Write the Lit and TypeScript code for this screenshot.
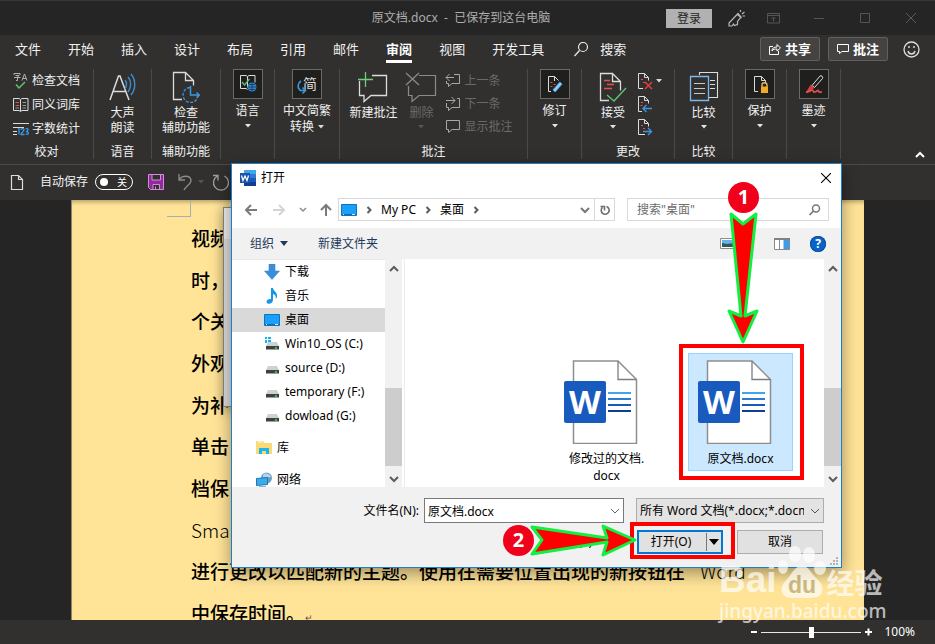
import { LitElement, html, css, svg, nothing, TemplateResult } from "lit";
import { customElement, property } from "lit/decorators.js";
import { classMap } from "lit/directives/class-map.js";

const pic = (w: number, h: number, body: unknown) =>
  html`<svg width=${w} height=${h} viewBox="0 0 ${w} ${h}" fill="none" aria-hidden="true">${body}</svg>`;

const caret = (color = "#d8d8d8") =>
  html`<svg width="6" height="4" viewBox="0 0 6 4" aria-hidden="true"><path d="M0 0h6L3 3.5z" fill=${color} /></svg>`;

const W = "#dcdcdc";
const ICON: Record<string, TemplateResult> = {
  spell: pic(16, 18, svg`<path d="M1 3V1.500h6V3M2.500 3.500h3.500L4.500 5M1 5.500h6.500M4.500 5v3.500H3M9 8.500L11.500 2 14 8.500M10 6.500h3" stroke="#b0b0b0"/><path d="M3 12.500l3 3.500 6-6" stroke="#5fc46e" stroke-width="1.500"/>`),
  book: pic(16, 16, svg`<path d="M.5 1.500h5.500l1.500 1 1.500-1h6v12H9l-1.500 1-1.500-1H.5zM7.500 3v11" stroke=${W}/><path d="M2.500 5.500h3.500M2.500 8.500h3.500" stroke="#e2504f"/><path d="M9.500 5.500h3.500M9.500 8.500h3.500M9.500 11h3.500M2.500 11h3.500" stroke="#9a9a9a"/>`),
  lines: pic(16, 16, svg`<path d="M0 2.500h16M0 6.500h11M0 10.500h4M0 13.500h4" stroke=${W}/><path d="M5 8l1-.5V13.500M8 9c0-2 3-2 3 0 0 1.500-3 2.500-3 4.500h3.500M12.500 8c3-1.500 3.500 2 .5 2.500 3.500.5 3 4-.5 2.500" stroke="#3c96dd" stroke-width="1.300"/>`),
  speak: pic(30, 32, svg`<path d="M2 29L10.500 5h1.500L21 29M5.500 20.500h12" stroke=${W} stroke-width="1.500"/><path d="M17 9c2 2 2 6 0 9M20 6c3.500 4 3.500 10 0 15M23 3c5 6 5 15 0 21" stroke="#3c8ed2" stroke-width="1.400"/>`),
  access: pic(28, 32, svg`<path d="M10 28.500H1.500v-27h12l8 8v5M13.500 1.500v8h8" stroke=${W} stroke-width="1.300"/><path d="M18 16.500a7.500 7.500 0 1 0 8 8" stroke="#3c96dd" stroke-width="1.300" stroke-dasharray="3 1.500"/><path d="M18.500 15v9h8M24.500 21.500l3 2.500-3 2.500" stroke="#3c96dd" stroke-width="1.500"/>`),
  lang: pic(20, 20, svg`<path d="M9.500 15.500l-1.500-1H2.500v-13H8l1.500 1 1.500-1h6v7M9.500 2.500v11" stroke=${W}/><path d="M4 8l2.500 3 5-6" stroke="#5fc46e" stroke-width="1.300"/><circle cx="14" cy="13" r="4.500" fill="#2b88d8"/><path d="M9.500 13h9M14 8.500v9M11 10.500h6M11 15.500h6" stroke="#1c2a38" stroke-width=".7"/>`),
  swap: html`<span class="jian">简${pic(12, 16, svg`<path d="M4 2c-3.500 2-4 7-.5 9.500h4.500M5.500 8.500l3 3-3 3" stroke="#3c96dd" stroke-width="1.600"/>`)}</span>`,
  newnote: pic(32, 32, svg`<path d="M15 4.500h14.500v20H14l-7 6v-6H2.500V10" stroke=${W} stroke-width="1.300"/><path d="M8.500 1v15M1 8.500h15" stroke="#6bd17b" stroke-width="1.300"/>`),
  delnote: pic(32, 32, svg`<path d="M14 4.500h16.500v20H14l-7 6v-6H3.500V15" stroke="#8a8a8a" stroke-width="1.200"/><path d="M1 2l13 12M14 2L1 14" stroke="#8a8a8a" stroke-width="1.300"/>`),
  prev: pic(16, 16, svg`<path d="M9 1.500h5.500v9H7l-3.500 3v-3h-2V8M9 4.500H1M4.500 1L1 4.500 4.500 8" stroke="#a8a8a8"/>`),
  next: pic(16, 16, svg`<path d="M12 2.500h2.500v9H7l-3.500 3v-3h-2V7M1 4.500h9M6.500 1L10 4.500 6.500 8" stroke="#a8a8a8"/>`),
  show: pic(16, 16, svg`<path d="M1.500 1.500h13v9H7l-3.500 3v-3h-2z" stroke="#a8a8a8"/>`),
  track: pic(20, 20, svg`<path d="M6 17.500H3.500v-15h6l4 4M9.500 2.500V7" stroke=${W}/><path d="M5.500 8.500h2M8.500 10.500h2M5.500 12.500h2" stroke="#e2504f"/><path d="M16 9L9 17" stroke="#3c96dd" stroke-width="4"/><path d="M16 9L9 17" stroke="#9dcdf3" stroke-width="2"/>`),
  accept: pic(28, 32, svg`<path d="M10 29.500H1.500v-27h12l8 8v9M13.500 2.500v8h8" stroke=${W} stroke-width="1.300"/><path d="M5 9.500h6M8 13.500h7M5 17.500h8" stroke="#e2504f" stroke-width="1.300"/><path d="M8 24l7 6 12-13" stroke="#5fc46e" stroke-width="1.400"/>`),
  rej: pic(16, 18, svg`<path d="M6 16.500H1.500v-15h6l4 4v3M7.500 1.500v4h4" stroke=${W}/><path d="M4 7.500h2M6 10.500h2" stroke="#e2504f"/><path d="M8 10l7 7M15 10l-7 7" stroke="#e33c3c" stroke-width="1.500"/>`),
  rejl: pic(16, 18, svg`<path d="M5 16.500H1.500v-15h6l4 4v3M7.500 1.500v4h4" stroke=${W}/><path d="M4 7.500h2M3.500 10.500h2" stroke="#e2504f"/><path d="M15 13.500H6.500M9.500 10L6 13.500 9.500 17" stroke="#3c96dd" stroke-width="1.400"/>`),
  rejr: pic(16, 18, svg`<path d="M8 16.500H1.500v-15h6l4 4v3M7.500 1.500v4h4" stroke=${W}/><path d="M4 7.500h2M6 10.500h2" stroke="#e2504f"/><path d="M6 13.500h8.500M11 10l3.500 3.500L11 17" stroke="#3c96dd" stroke-width="1.400"/>`),
  compare: pic(30, 32, svg`<path d="M10.500 4V1.500h18v25h-9M21 9.500h5M21 13.500h5M21 17.500h5" stroke=${W} stroke-width="1.100"/><path d="M1.500 5.500h18v24h-18z" stroke="#7db8ec" stroke-width="1.300"/><path d="M5 12.500h11M5 17.500h11M5 22.500h11" stroke="#c8c8c8" stroke-width="1.100"/>`),
  protect: pic(20, 20, svg`<path d="M8 17.500H4.500v-15h7l4 4v3M11.500 2.500v4h4" stroke=${W}/><path d="M12 13v-2c0-3 5-3 5 0v2" stroke="#e8b94f" stroke-width="1.400"/><path d="M11 12.500h7V19h-7z" fill="#f3a928"/>`),
  ink: pic(20, 20, svg`<path d="M16 2L8 11.500l2.500 2L18.500 4.500c1-2-1.500-3.500-2.500-2.500z" stroke=${W}/><path d="M7 10.500c-2 2-3 5-5 7.500 4 .5 6-1 8-4z" fill="#d23c3c"/><path d="M2 18.500c3-1 6-3 7-2s0 2 2 1.500 3-3 3.500-1 2 1 3.500 1" stroke="#e2504f" stroke-width="1.700"/>`),
};

interface Tool { icon: string; lines: string[]; boxed?: boolean; drop?: "below" | "inline"; off?: boolean }
interface Group { cls: string; label: string; tools?: Tool[]; list?: { icon: string; text: string; off?: boolean; drop?: boolean }[]; tight?: boolean }

const GROUPS: Group[] = [
  { cls: "w94", label: "校对", list: [{ icon: "spell", text: "检查文档" }, { icon: "book", text: "同义词库" }, { icon: "lines", text: "字数统计" }] },
  { cls: "w58", label: "语音", tools: [{ icon: "speak", lines: ["大声", "朗读"] }] },
  { cls: "w69", label: "辅助功能", tools: [{ icon: "access", lines: ["检查", "辅助功能"] }] },
  { cls: "w54", label: "", tools: [{ icon: "lang", lines: ["语言"], boxed: true, drop: "below" }] },
  { cls: "w65", label: "", tools: [{ icon: "swap", lines: ["中文简繁", "转换"], boxed: true, drop: "inline" }] },
  { cls: "w188", label: "批注", tight: true,
    tools: [{ icon: "newnote", lines: ["新建批注"] }, { icon: "delnote", lines: ["删除"], drop: "below", off: true }],
    list: [{ icon: "prev", text: "上一条", off: true }, { icon: "next", text: "下一条", off: true }, { icon: "show", text: "显示批注", off: true }] },
  { cls: "w54", label: "", tools: [{ icon: "track", lines: ["修订"], boxed: true, drop: "below" }] },
  { cls: "w93", label: "更改", tight: true,
    tools: [{ icon: "accept", lines: ["接受"], drop: "below" }],
    list: [{ icon: "rej", text: "", drop: true }, { icon: "rejl", text: "" }, { icon: "rejr", text: "" }] },
  { cls: "w58", label: "比较", tools: [{ icon: "compare", lines: ["比较"], drop: "below" }] },
  { cls: "w54", label: "", tools: [{ icon: "protect", lines: ["保护"], boxed: true, drop: "below" }] },
  { cls: "w54", label: "", tools: [{ icon: "ink", lines: ["墨迹"], boxed: true, drop: "below" }] },
];

const base = css`
  * { box-sizing: border-box; }
  svg { display: block; flex: none; }
  button, input, select {
    font: inherit; color: inherit; background: none; border: 0; padding: 0; margin: 0; border-radius: 0; outline: none;
  }
  a { color: inherit; text-decoration: none; }
`;

@customElement("word-ribbon")
class WordRibbon extends LitElement {
  static styles = [base, css`
    :host { display: flex; height: 96px; padding-bottom: 5px; border-bottom: 1px solid #4a4a49; font-size: 12px; line-height: 16px; color: #f0f0f0; }
    .group { display: flex; flex-direction: column; flex: none; border-right: 1px solid #4b4a49; }
    .w54 { width: 54px; } .w58 { width: 58px; } .w65 { width: 65px; } .w69 { width: 69px; }
    .w93 { width: 93px; } .w94 { width: 94px; } .w188 { width: 188px; }
    .body { display: flex; flex: 1; justify-content: center; }
    .tight { padding-right: 5px; }
    .label { text-align: center; height: 15px; line-height: 15px; }
    .tool { display: flex; flex-direction: column; align-items: center; width: 48px; flex: none; white-space: nowrap; line-height: 15px; }
    .face { height: 36px; display: flex; align-items: center; justify-content: center; }
    .boxed { line-height: 16px; }
    .boxed .face { width: 30px; height: 30px; border: 1px solid #6a6a6a; background: #1f1f1e; margin-bottom: 4px; }
    .line { display: flex; align-items: center; gap: 4px; }
    .below { padding-top: 5px; }
    .off { color: #6b6a69; }
    .list { display: flex; flex-direction: column; }
    .row { display: flex; align-items: center; gap: 3px; height: 24px; white-space: nowrap; }
    .tight .row { height: 23px; }
    .jian { position: relative; font-size: 14px; color: #dcdcdc; padding-left: 6px; line-height: 20px; }
    .jian svg { position: absolute; left: 0; top: 5px; }
    .fold { margin-left: auto; align-self: flex-end; padding: 0 10px 0 0; }
  `];

  render() {
    return html`${GROUPS.map((g) => html`
      <section class="group ${g.cls}">
        <div class="body ${g.tight ? "tight" : ""}">
          ${g.tools?.map((t) => html`
            <button class=${classMap({ tool: true, boxed: !!t.boxed, off: !!t.off })}>
              <span class="face">${ICON[t.icon]}</span>
              ${t.lines.map((l, i) => html`<span class="line">${l}${t.drop === "inline" && i === t.lines.length - 1 ? caret() : nothing}</span>`)}
              ${t.drop === "below" ? html`<span class="below">${caret(t.off ? "#555" : "#e4e4e4")}</span>` : nothing}
            </button>`) ?? nothing}
          ${g.list ? html`<div class="list">${g.list.map((r) => html`
            <button class="row ${r.off ? "off" : ""}">${ICON[r.icon]}${r.text ? html`<span>${r.text}</span>` : nothing}${r.drop ? caret() : nothing}</button>`)}</div>` : nothing}
        </div>
        <div class="label">${g.label}</div>
      </section>`)}
      <button class="fold" aria-label="折叠功能区">${pic(10, 8, svg`<path d="M1 6l4-4 4 4" stroke="#fff" stroke-width="2"/>`)}</button>`;
  }
}

const deskIcon = pic(16, 16, svg`<path d="M.5 2.500h15v11H.5z" fill="#1aa0fb" stroke="#1273b4"/><path d="M1 12.500h14" stroke="#0f6db4"/><path d="M2 12.500h1M11 12.500h3" stroke="#d6efff"/>`);
const disk = (win = false) => pic(16, 16, svg`${win ? svg`<path d="M1 1h2v2H1zM4 1h3v2H4zM1 4h2v3H1zM4 4h3v3H4z" fill="#12b4ee"/>` : nothing}<path d="M4 6h9l2 4H2z" fill="#ced1d1"/><path d="M2 10h13v3.500H2z" fill="#3d4142"/><path d="M11 12h2" stroke="#46dd4b" stroke-width="1.500"/>`);
const TREE = [
  { text: "下载", cls: "sub", icon: pic(16, 16, svg`<path d="M5 0h6v7h4.500L8 15.500.5 7H5z" fill="#3a8fdd" stroke="#2f7ec8" stroke-width=".5"/>`) },
  { text: "音乐", cls: "sub", icon: pic(16, 16, svg`<path d="M7 0h2c0 3 4.500 4 4 8.500-.3 1.500-1 2-1.500 2.500.8-3-.5-4.500-2.500-5v6c0 4-6 5-6.500 2 0-2.500 2.500-3.500 4.500-3z" fill="#1496ee"/>`) },
  { text: "桌面", cls: "sub on", icon: deskIcon },
  { text: "Win10_OS (C:)", cls: "sub", icon: disk(true) },
  { text: "source (D:)", cls: "sub", icon: disk() },
  { text: "temporary (F:)", cls: "sub", icon: disk() },
  { text: "dowload (G:)", cls: "sub", icon: disk() },
  { text: "库", cls: "top", icon: pic(16, 16, svg`<path d="M0 1h7l1 2h8v11H0z" fill="#fbd976"/><path d="M2 2h4" stroke="#fff"/><path d="M3 14V8h10v6h-3v-3H6v3z" fill="#1cb6ee"/>`) },
  { text: "网络", cls: "top", icon: pic(16, 16, svg`<circle cx="10.500" cy="6" r="5.500" fill="#6c9fc5"/><path d="M7 3c3-3 7-1 8 2-3 1-4-1-8 1z" fill="#b7d3e6"/><path d="M.5 6.500l11-1v7l-11 1z" fill="#3cabe9" stroke="#1b78ba"/><path d="M3 15h7" stroke="#2a6a99"/>`) },
];

const chev = (d: "up" | "down" | "right", color = "#5c5c5c", width = 2) => pic(10, 10,
  d === "up" ? svg`<path d="M1 7l4-4 4 4" stroke=${color} stroke-width=${width}/>`
  : d === "down" ? svg`<path d="M1 3l4 4 4-4" stroke=${color} stroke-width=${width}/>`
  : svg`<path d="M3.500 2l3 3-3 3" stroke=${color} stroke-width=${width}/>`);

@customElement("doc-file")
class DocFile extends LitElement {
  @property() name = "";
  @property({ type: Boolean, reflect: true }) selected = false;
  static styles = [base, css`
    :host { display: block; position: relative; width: 105px; height: 118px; padding-top: 6px; border: 1px solid transparent; }
    :host([selected]) { background: #cce8ff; border-color: #99d1ff; }
    .art { margin-left: 8px; }
    .name { display: block; text-align: center; line-height: 17px; padding: 6px 10px 0; word-break: keep-all; }
    .w { font: bold 33px "Open Sans", "Noto Sans", sans-serif; }
    .frame { position: absolute; inset: -10px -12px -10px -10px; border: 4px solid #ff0000; }
  `];
  render() {
    const dot = this.name.lastIndexOf(".") + 1;
    return html`<svg class="art" width="84" height="84" viewBox="0 0 84 84" aria-hidden="true">
        <path d="M10.500 1H55l18.500 18.500V83.500h-63z" fill="#fff" stroke="#8e8e8e" stroke-width="1.500"/>
        <path d="M55 1v18.500h18.500" fill="none" stroke="#7d7d7d" stroke-width="1.300"/>
        <rect x="1" y="21" width="42" height="42" rx="2" fill="#185abd"/>
        <text class="w" x="22" y="54" text-anchor="middle" fill="#fff">W</text>
        <path d="M45 33h23" stroke="#41a5ee" stroke-width="2"/><path d="M45 39h23" stroke="#2b7cd3" stroke-width="2"/>
        <path d="M45 45h23" stroke="#185abd" stroke-width="2"/><path d="M45 51h23" stroke="#103f91" stroke-width="2"/>
      </svg>
      <span class="name">${this.name.slice(0, dot)}<wbr>${this.name.slice(dot)}</span>
      ${this.selected ? html`<span class="frame"></span>` : nothing}`;
  }
}

@customElement("open-dialog")
class OpenDialog extends LitElement {
  static styles = [base, css`
    :host { display: flex; flex-direction: column; background: #fff; color: #000; border: 1px solid #1a7fd0; font-size: 12px; line-height: 16px; box-shadow: 0 5px 16px rgba(0, 0, 0, .4); }
    .bar { display: flex; align-items: center; flex: none; }
    .title { height: 27px; padding: 0 10px 0 8px; gap: 5px; }
    .title .x { margin-left: auto; }
    .nav { height: 37px; padding: 0 12px 0 11px; }
    .nav .arrows { display: flex; align-items: center; width: 95px; gap: 12px; }
    .path { display: flex; align-items: center; flex: 1; height: 23px; border: 1px solid #d9d9d9; padding-left: 2px; gap: 7px; }
    .path .end { margin-left: auto; display: flex; align-items: center; align-self: stretch; gap: 4px; }
    .path .re { border-left: 1px solid #d9d9d9; align-self: stretch; width: 20px; display: flex; align-items: center; justify-content: center; }
    .find { display: flex; align-items: center; width: 202px; height: 23px; margin-left: 12px; border: 1px solid #d9d9d9; padding: 0 7px 0 9px; }
    .find input { flex: 1; min-width: 0; }
    .find input::placeholder { color: #6d6d6d; opacity: 1; }
    .tools { height: 31px; background: #f1f1f1; color: #1e395b; padding: 0 15px 0 18px; }
    .tools button { display: flex; align-items: center; gap: 6px; }
    .tools .new { margin-left: 30px; }
    .tools .view { margin-left: auto; }
    .tools .pane { margin-left: 38px; }
    .tools .help { margin-left: 20px; width: 16px; height: 16px; border-radius: 8px; background: #0a63c9; color: #fff; font-weight: bold; justify-content: center; box-shadow: inset 0 0 0 1px #0b4f9e; }
    .main { display: flex; flex: 1; min-height: 0; }
    .tree { width: 153px; overflow: hidden; border-top: 1px solid #e6e6e6; }
    .node { display: flex; align-items: center; gap: 5px; height: 24px; white-space: nowrap; }
    .sub { padding-left: 32px; }
    .top { padding-left: 24px; margin-top: 8px; }
    .on { background: #d9d9d9; }
    .scroll { display: flex; flex-direction: column; align-items: center; width: 17px; background: #f1f1f1; padding: 5px 0 3px; }
    .scroll .thumb { width: 17px; height: 78px; background: #cdcdcd; margin: auto 0 8px; }
    .files { flex: 1; display: flex; justify-content: flex-end; gap: 29px; margin-left: 2px; border-left: 1px solid #ececec; padding: 94px 31px 0 0; }
    .foot { background: #f1f1f1; padding: 11px 17px 13px 0; display: grid; grid-template-columns: 1fr 200px 188px; column-gap: 12px; row-gap: 7px; align-items: center; }
    .foot label { text-align: right; margin-right: -7px; }
    .combo { position: relative; display: flex; align-items: center; height: 25px; border: 1px solid #7a7a7a; background: #fff; padding: 0 3px; gap: 6px; }
    .combo input, .combo select { flex: 1; min-width: 0; height: 100%; }
    .combo select { appearance: none; }
    .kind { border-color: #adadad; background: #e3e3e3; }
    .util { grid-column: 2; text-align: right; padding-right: 32px; }
    .acts { display: flex; justify-content: space-between; padding: 0 1px; }
    .btn { height: 24px; width: 86px; border: 1px solid #adadad; background: #e1e1e1; }
    .split { position: relative; display: flex; width: 86px; height: 24px; border: 2px solid #0078d7; background: #e1e1e1; }
    .split .go { flex: 1; padding-right: 3px; }
    .split .more { width: 15px; border-left: 1px solid #777; display: flex; align-items: center; justify-content: center; margin: 1px 0; }
    .split .ring { position: absolute; inset: -10px -14px -7px -9px; border: 4px solid #ff0000; pointer-events: none; }
    .grip { position: absolute; right: 3px; bottom: 2px; }
    .note { position: absolute; pointer-events: none; }
    .badge { position: absolute; width: 31px; height: 31px; border-radius: 16px; background: #f0001a; color: #fff; font: bold 20px/30px "Open Sans", sans-serif; text-align: center; }
    .b1 { left: 496px; top: 18px; } .b2 { left: 271px; top: 361px; }
    .a1 { left: 494px; top: 46px; } .a2 { left: 296px; top: 359px; }
  `];
  render() {
    return html`
      <div class="bar title">
        ${pic(16, 16, svg`<path d="M4 0h12v4H4z" fill="#41a5ee"/><path d="M4 4h12v4H4z" fill="#2b7cd3"/><path d="M4 8h12v4H4z" fill="#185abd"/><path d="M4 12h12v4H4z" fill="#103f91"/><path d="M0 3h10v10H0z" fill="#1a52ad"/><path d="M1.500 5.500L3 10.500l2-4.500 2 4.500 1.500-5" stroke="#fff" stroke-width="1.300"/>`)}
        <span>打开</span>
        <button class="x" aria-label="关闭">${pic(10, 10, svg`<path d="M0 0l10 10M10 0L0 10" stroke="#000" stroke-width="1.100"/>`)}</button>
      </div>
      <div class="bar nav">
        <div class="arrows">
          <button aria-label="后退">${pic(16, 14, svg`<path d="M14 7H3M8 2L3 7l5 5" stroke="#7b7b7b" stroke-width="2"/>`)}</button>
          <button aria-label="前进">${pic(16, 14, svg`<path d="M2 7h11M8 2l5 5-5 5" stroke="#d4d4d4" stroke-width="2"/>`)}</button>
          <button aria-label="最近">${pic(8, 10, svg`<path d="M1 3l3 3 3-3" stroke="#8b8b8b" stroke-width="1.500"/>`)}</button>
          <button aria-label="向上">${pic(14, 14, svg`<path d="M7 13V2M2 7l5-5 5 5" stroke="#7b7b7b" stroke-width="2"/>`)}</button>
        </div>
        <nav class="path">
          ${deskIcon}${chev("right")}<a href="#">My PC</a>${chev("right")}<a href="#">桌面</a>${chev("right")}
          <span class="end">${chev("down", "#777")}<button class="re" aria-label="刷新">${pic(12, 12, svg`<path d="M7.500 2.500a4 4 0 1 1-4 .8M1.500 2.500h4v4" stroke="#707070" stroke-width="1.600"/>`)}</button></span>
        </nav>
        <div class="find"><input aria-label="搜索" placeholder='搜索"桌面"'>${pic(12, 12, svg`<circle cx="7" cy="4.500" r="3.500" stroke="#777" stroke-width="1.500"/><path d="M4.500 7L.5 11" stroke="#777" stroke-width="1.700"/>`)}</div>
      </div>
      <div class="bar tools">
        <button>组织 ${pic(8, 5, svg`<path d="M0 0h8L4 5z" fill="#1e395b"/>`)}</button>
        <button class="new">新建文件夹</button>
        <button class="view" aria-label="视图">${pic(16, 12, svg`<path d="M.5.500h15v10H.5z" fill="#fff" stroke="#8c8c8c"/><path d="M2 2h12v4H2z" fill="#69b1ea"/><path d="M2 5l5 1 7-1v4H2z" fill="#2d5c58"/>`)}</button>
        <button class="pane" aria-label="预览窗格">${pic(16, 12, svg`<path d="M.5.500h15v11H.5zM5.500 2v9" fill="#fff" stroke="#858b91"/><path d="M0 1h16" stroke="#7b8288" stroke-width="2"/><path d="M9.500 2H15v9H9.500z" fill="#3e9ce8"/>`)}</button>
        <button class="help" aria-label="帮助">?</button>
      </div>
      <div class="main">
        <div class="tree">${TREE.map((n) => html`<div class="node ${n.cls}">${n.icon}<span>${n.text}</span></div>`)}</div>
        <div class="scroll">${chev("up")}<span class="thumb"></span>${chev("down")}</div>
        <div class="files">
          <doc-file name="修改过的文档.docx"></doc-file>
          <doc-file name="原文档.docx" selected></doc-file>
        </div>
        <div class="scroll">${chev("up")}<span class="thumb"></span>${chev("down")}</div>
      </div>
      <div class="foot">
        <label for="fn">文件名(N):</label>
        <div class="combo"><input id="fn" value="原文档.docx">${chev("down", "#666", 1)}</div>
        <div class="combo kind"><select aria-label="文件类型"><option>所有 Word 文档(*.docx;*.docm</option></select>${chev("down", "#555", 1)}</div>
        <span class="util">工具(L)</span>
        <div class="acts">
          <div class="split"><button class="go">打开(O)</button><button class="more" aria-label="更多打开方式">${pic(10, 6, svg`<path d="M0 0h10L5 6z" fill="#000"/>`)}</button><span class="ring"></span></div>
          <button class="btn">取消</button>
        </div>
      </div>
      <svg class="grip" width="8" height="8" viewBox="0 0 8 8"><path d="M6 0h2v2H6zM3 3h2v2H3zM6 3h2v2H6zM0 6h2v2H0zM3 6h2v2H3zM6 6h2v2H6z" fill="#b4b4b4"/></svg>
      <svg class="note a1" width="34" height="136" viewBox="0 0 34 136"><path d="M5 4l12 10L30 4 19 106l12-5-14 31L3 101l12 5z" fill="#f00" stroke="#10f040" stroke-width="3" stroke-linejoin="round"/></svg>
      <svg class="note a2" width="112" height="34" viewBox="0 0 112 34"><path d="M4 4l10 13L4 31l75-12-4 13 32-15L75 3l4 12z" fill="#f00" stroke="#10f040" stroke-width="3" stroke-linejoin="round"/></svg>
      <span class="badge b1">1</span><span class="badge b2">2</span>`;
  }
}

const TABS = ["文件", "开始", "插入", "设计", "布局", "引用", "邮件", "审阅", "视图", "开发工具"];
const LINES = ["视频", "时，", "个关", "外观", "为补", "单击", "档保"];

@customElement("app-root")
class AppRoot extends LitElement {
  static styles = [base, css`
    :host { display: flex; flex-direction: column; position: relative; min-height: 100vh; overflow: hidden; background: #31302f; color: #f0f0f0;
      font-family: "Noto Sans", "Noto Sans CJK SC", sans-serif; font-size: 12px; line-height: 16px; }
    .caption { display: grid; grid-template-columns: minmax(0, 1fr) auto minmax(0, 1fr); align-items: center; height: 35px; background: #252525; border-top: 1px solid #383838; color: #aeaeae; padding-right: 1px; }
    .caption h1 { grid-column: 2; margin: 0; font-size: 12px; font-weight: normal; padding-right: 12px; white-space: pre; }
    .sys { display: flex; align-items: center; justify-content: flex-end; }
    .sys button { display: flex; justify-content: center; width: 46px; }
    .sys .in { width: 46px; height: 19px; line-height: 19px; background: #b1b1b1; color: #252525; margin-right: 10px; }
    .sys .pen { width: 28px; }
    .tabs { display: flex; align-items: center; height: 34px; padding: 0 15px 6px; font-size: 13px; }
    .tabs nav { display: flex; gap: 27px; }
    .tab { line-height: 18px; padding: 5px 0 2px; border-bottom: 3px solid transparent; white-space: nowrap; }
    .cur { font-weight: bold; color: #fff; border-color: #fff; }
    .seek { display: flex; align-items: center; gap: 12px; margin-left: 30px; }
    .right { display: flex; align-items: center; gap: 8px; margin-left: auto; }
    .pill { display: flex; align-items: center; justify-content: center; gap: 4px; width: 60px; height: 24px; border: 1px solid #616060; border-radius: 2px; background: #444342; font-weight: bold; color: #fff; }
    .face { margin-left: 7px; }
    .quick { display: flex; align-items: center; height: 35px; padding: 0 0 1px 10px; }
    .quick label { margin: 0 7px 0 16px; display: flex; align-items: center; gap: 7px; }
    .toggle { position: relative; display: flex; align-items: center; justify-content: flex-end; width: 38px; height: 16px; border: 1px solid #fff; border-radius: 8px; padding-right: 5px; font-size: 10px; color: #fff; }
    .toggle input { appearance: none; position: absolute; left: 4px; top: 3px; width: 8px; height: 8px; border-radius: 4px; background: #fff; }
    .quick .save { margin-left: 8px; } .quick .undo { margin: 0 5px 0 13px; } .quick .redo { margin-left: 8px; }
    .canvas { flex: 1; display: flex; background: #252525; padding: 0 71px; min-height: 420px; overflow: hidden; }
    .page { flex: 1; position: relative; display: flex; flex-direction: column; justify-content: space-between; background: #ffe498; color: #000; border-left: 1px solid #8f8767; padding: 24px 0 0 119px; box-shadow: inset 0 5px 4px -3px rgba(0, 0, 0, .3); font: 500 19px/28px "Noto Sans CJK SC", sans-serif; }
    .page p { margin: 0; height: 28px; white-space: nowrap; }
    .page p:last-child { height: 21px; }
    .thin { font-weight: 300; } .gap { margin-left: 15px; }
    .mark { font-size: 9px; color: #555; }
    .corner { position: absolute; left: 95px; top: 0; width: 24px; height: 17px; border: solid #a9adb5; border-width: 0 1px 1px 0; }
    .status { position: relative; display: flex; align-items: center; justify-content: flex-end; height: 24px; background: #31302f; padding-right: 20px; color: #fff; gap: 4px; }
    .status input { appearance: none; width: 100px; height: 14px; background: linear-gradient(#e8e8e8, #e8e8e8) center / 100% 1px no-repeat; }
    .status input::-webkit-slider-thumb { appearance: none; width: 5px; height: 11px; background: #fff; }
    .status output { margin-left: 7px; }
    .behind { position: absolute; left: 223px; top: 207px; width: 60px; height: 200px; background: linear-gradient(#ececec 31px, #dcdcdc 31px); border: 1px solid #88867a; box-shadow: 0 3px 12px rgba(0, 0, 0, .35); }
    .dlg { position: absolute; left: 231px; top: 163px; width: 611px; height: 405px; }
    .brand { position: absolute; left: 719px; top: 544px; color: #fff; opacity: .68; pointer-events: none; }
    .logo { display: flex; align-items: flex-end; height: 56px; font: bold 37px/40px "Liberation Sans", sans-serif; }
    .logo .cn { font: bold 28px/36px "Noto Sans CJK SC", sans-serif; }
    .du { font: bold 23px "Liberation Sans", sans-serif; }
    .url { font: 500 19px/22px "Noto Sans", sans-serif; }
  `];
  render() {
    return html`
      <header class="caption">
        <h1>原文档.docx  -  已保存到这台电脑</h1>
        <div class="sys">
          <button class="in">登录</button>
          <button class="pen" aria-label="笔">${pic(17, 17, svg`<path d="M10 3.500L1 13v3h3l1.500-2 1 1.500 3-1v-3l3.500-4.500zM9 4l4.500 4M12.500 2V0M14 4l2.500-2M14.500 6h2.500" stroke="#b8b8b8" stroke-width="1.200"/>`)}</button>
          <button aria-label="功能区显示选项">${pic(13, 11, svg`<path d="M.5.500h12v9.500H.5zM.5 2.500h12M6.500 8.500v-4M4.500 6l2-2 2 2" stroke="#555"/>`)}</button>
          <button aria-label="最小化">${pic(10, 10, svg`<path d="M0 5.500h10" stroke="#555"/>`)}</button>
          <button aria-label="最大化">${pic(10, 10, svg`<path d="M.5.500h9v9h-9z" stroke="#555"/>`)}</button>
          <button aria-label="关闭">${pic(10, 10, svg`<path d="M0 0l10 10M10 0L0 10" stroke="#5c5c5c"/>`)}</button>
        </div>
      </header>
      <div class="tabs">
        <nav>${TABS.map((t) => html`<a href="#" class="tab ${t === "审阅" ? "cur" : ""}">${t}</a>`)}</nav>
        <button class="seek">${pic(14, 15, svg`<circle cx="9" cy="5" r="4.500" stroke="#e6e6e6" stroke-width="1.200"/><path d="M5.500 8.500L.5 14" stroke="#e6e6e6" stroke-width="1.300"/>`)}搜索</button>
        <div class="right">
          <button class="pill">${pic(12, 12, svg`<path d="M4 3.500H.5v8h9V8M3 8c0-3 2-4 5-4V1.500L11.500 5 8 8V6C6 6 4 6 3 8z" stroke="#fff"/>`)}共享</button>
          <button class="pill">${pic(12, 12, svg`<path d="M.5 1.500h11v7H5l-2.500 2v-2h-2z" stroke="#fff"/>`)}批注</button>
          <button class="face" aria-label="反馈">${pic(17, 17, svg`<circle cx="8.500" cy="8.500" r="7.500" stroke="#dedede" stroke-width="1.300"/><path d="M5 10c1 4 6 4 7 0M6 5v2M11 5v2" stroke="#dedede" stroke-width="1.400"/>`)}</button>
        </div>
      </div>
      <word-ribbon></word-ribbon>
      <div class="quick">
        ${pic(14, 17, svg`<path d="M1.500 1.500h7l4 4v10h-11zM8.500 1.500v4h4" stroke="#dcdcdc" stroke-width="1.200"/>`)}
        <label>自动保存<span class="toggle"><input type="checkbox">关</span></label>
        <button class="save" aria-label="保存">${pic(16, 16, svg`<path d="M.5.500h15v15h-13l-2-2z" fill="#8e2d9a" stroke="#d58bdd"/><path d="M4 1v5h8.500V1M5 15v-4.500h6.500V15M7.500 15v-2.500" fill="#31302f" stroke="#d58bdd"/>`)}</button>
        <button class="undo" aria-label="撤消">${pic(16, 18, svg`<path d="M2 1v6h6M2 7c3-5 11-5 12 0 .500 4-5 6-7 10" stroke="#8b8b8b" stroke-width="1.300"/>`)}</button>${caret("#555")}
        <button class="redo" aria-label="恢复">${pic(18, 18, svg`<path d="M1 2.500h5v5M5.500 3a7.500 7.500 0 1 0 7 0" stroke="#a0a0a0" stroke-width="1.300"/>`)}</button>
      </div>
      <main class="canvas">
        <article class="page">
          <span class="corner"></span>
          ${LINES.map((l) => html`<p>${l}</p>`)}
          <p class="thin">Smar</p>
          <p>进行更改以匹配新的主题。使用在需要位置出现的新按钮在<span class="thin gap">Word</span></p>
          <p>中保存时间。<span class="mark">↵</span></p>
        </article>
      </main>
      <footer class="status">
        ${pic(6, 6, svg`<path d="M0 3h6" stroke="#fff" stroke-width="2"/>`)}
        <input type="range" aria-label="缩放" value="50">
        ${pic(8, 8, svg`<path d="M0 4h7M3.500 .5v7" stroke="#fff" stroke-width="2"/>`)}
        <output>100%</output>
      </footer>
      <div class="behind"></div>
      <open-dialog class="dlg"></open-dialog>
      <div class="brand">
        <div class="logo">Bai<svg width="50" height="56" viewBox="0 0 50 56"><path d="M25 22c7 0 8 6 13 11s9 8 7 15-10 6-20 6-18 1-20-6 3-10 7-15 6-11 13-11z" fill="#fff"/><ellipse cx="18" cy="10" rx="6" ry="8" fill="#fff"/><ellipse cx="32" cy="11" rx="6" ry="8" fill="#fff"/><ellipse cx="6" cy="23" rx="5" ry="7" fill="#fff"/><ellipse cx="43" cy="24" rx="6" ry="7" fill="#fff"/><text class="du" x="25" y="49" text-anchor="middle" fill="#b3a67c">du</text></svg><span class="cn">经验</span></div>
        <div class="url">jingyan.baidu.com</div>
      </div>`;
  }
}
